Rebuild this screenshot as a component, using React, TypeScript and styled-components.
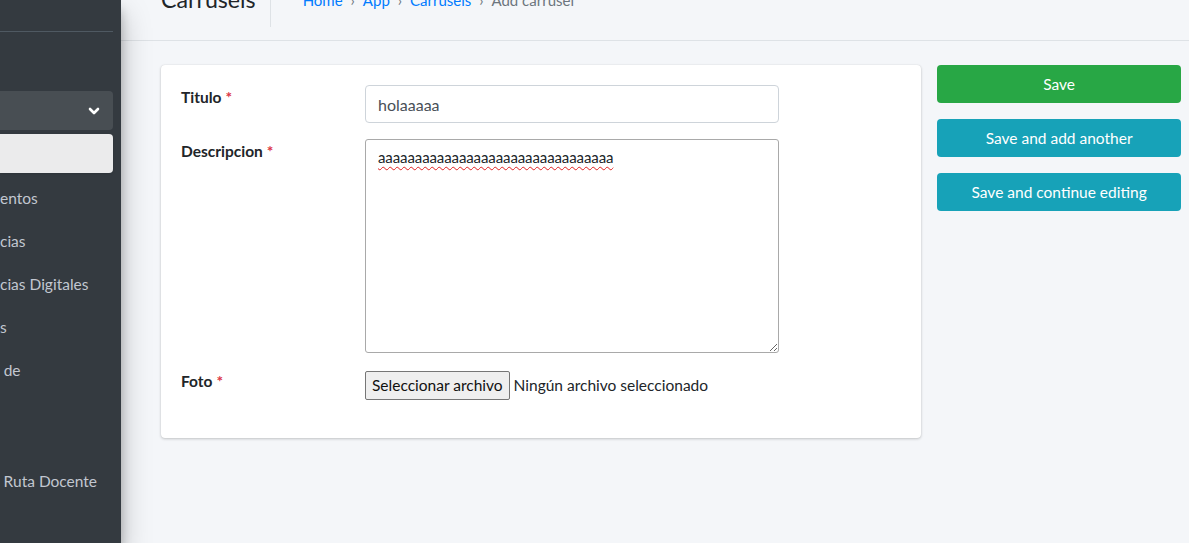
import React from "react";
import styled, { createGlobalStyle } from "styled-components";

const GlobalStyle = createGlobalStyle`
  html, body { margin: 0; padding: 0; }
  body {
    font-family: Lato, "Liberation Sans", sans-serif;
    font-size: 16px;
    color: #212529;
    background: #f4f6f9;
    overflow: hidden;
  }
  * { box-sizing: border-box; }
`;

const Shell = styled.div`
  display: flex;
  width: 1189px;
  height: 543px;
  overflow: hidden;
`;

const Sidebar = styled.aside`
  width: 121px;
  flex: none;
  background: #343a40;
  box-shadow: 0 14px 28px rgba(0, 0, 0, 0.25), 0 10px 10px rgba(0, 0, 0, 0.22);
  overflow: hidden;
  position: relative;
  z-index: 2;
`;

const Brand = styled.div`
  height: 32px;
  margin-right: 8px;
  border-bottom: 1px solid #4f5962;
`;

const Nav = styled.nav`
  display: flex;
  flex-direction: column;
  gap: 4px;
  padding-top: 59px;
  margin-right: 8px;
`;

const OpenItem = styled.div`
  height: 39px;
  background: rgba(255, 255, 255, 0.1);
  border-radius: 0 4px 4px 0;
  display: flex;
  align-items: center;
  justify-content: flex-end;
  padding-right: 13px;
  color: #fff;
`;

const ActiveItem = styled.div`
  height: 39px;
  background: rgba(255, 255, 255, 0.9);
  border-radius: 0 4px 4px 0;
  box-shadow: 0 1px 3px rgba(0, 0, 0, 0.12);
`;

const SubList = styled.div`
  display: flex;
  flex-direction: column;
`;

const NavLink = styled.div<{ $indent?: number; $height?: number }>`
  height: ${(p) => p.$height ?? 43}px;
  padding-top: 9px;
  color: #c2c7d0;
  font-size: 15.5px;
  line-height: 24px;
  white-space: nowrap;
  text-indent: ${(p) => p.$indent ?? 0}px;
`;

const Main = styled.main`
  flex: 1;
  display: flex;
  flex-direction: column;
  min-width: 0;
`;

const Header = styled.header`
  height: 41px;
  border-bottom: 1px solid #dee2e6;
  display: flex;
  align-items: flex-end;
  padding: 0 0 27px 40px;
  overflow: hidden;
`;

const Title = styled.h1`
  margin: 0 32px -14px 0;
  font-size: 23.2px;
  font-weight: 400;
  line-height: 30px;
  color: #212529;
  padding: 0 14px 13px 0;
  border-right: 1px solid #dee2e6;
  height: 40px;
  display: flex;
  align-items: flex-end;
`;

const Crumbs = styled.ol`
  list-style: none;
  margin: 0 0 -7px 0;
  padding: 0;
  display: flex;
  align-items: center;
  font-size: 15px;
  line-height: 24px;
  transform: translateY(-8px);
`;

const Crumb = styled.li<{ $active?: boolean }>`
  color: ${(p) => (p.$active ? "#6c757d" : "#007bff")};
  display: flex;
  align-items: center;
`;

const Sep = styled.span`
  color: #6c757d;
  padding: 0 8px;
`;

const Content = styled.div`
  display: flex;
  gap: 16px;
  padding: 24px 8px 0 40px;
  align-items: flex-start;
`;

const Card = styled.section`
  width: 761px;
  background: #fff;
  border-radius: 4px;
  box-shadow: 0 0 1px rgba(0, 0, 0, 0.125), 0 1px 3px rgba(0, 0, 0, 0.2);
  padding: 20px 20px 22px 20px;
`;

const Row = styled.div`
  display: flex;
  margin-bottom: 16px;
`;

const Label = styled.label`
  width: 184px;
  flex: none;
  font-weight: 700;
  font-size: 15.5px;
  line-height: 24px;
  color: #212529;
`;

const Req = styled.span`
  color: #dc3545;
  margin-left: 4px;
`;

const TextInput = styled.input`
  width: 414px;
  height: 38px;
  border: 1px solid #ced4da;
  border-radius: 4px;
  padding: 6px 12px;
  font-family: inherit;
  font-size: 16px;
  color: #495057;
  background: #fff;
  outline: none;
`;

const TextArea = styled.textarea`
  width: 414px;
  height: 214px;
  border: 1px solid #a9a9a9;
  border-radius: 3px;
  padding: 8px 12px;
  font-family: inherit;
  font-size: 15px;
  line-height: 19px;
  letter-spacing: -0.1px;
  color: #212529;
  background: #fff;
  outline: none;
  text-decoration: underline wavy #e02020;
  text-decoration-thickness: 1px;
  text-underline-offset: 3px;
`;

const FileRow = styled.div`
  display: flex;
  align-items: center;
  gap: 4px;
  height: 30px;
  margin-top: 1px;
`;

const FileButton = styled.button`
  height: 29px;
  padding: 0 6px;
  font-family: inherit;
  font-size: 15.5px;
  color: #111;
  background: #efefef;
  border: 1px solid #767676;
  border-radius: 2px;
`;

const FileText = styled.span`
  font-size: 15.5px;
  color: #212529;
`;

const Actions = styled.div`
  width: 244px;
  display: flex;
  flex-direction: column;
  gap: 16px;
`;

const ActionButton = styled.button<{ $variant: "success" | "info" }>`
  height: 38px;
  border: none;
  border-radius: 4px;
  font-family: inherit;
  font-size: 15.5px;
  color: #fff;
  background: ${(p) => (p.$variant === "success" ? "#28a745" : "#17a2b8")};
`;

export default function App() {
  return (
    <>
      <GlobalStyle />
      <Shell>
        <Sidebar>
          <Brand />
          <Nav>
            <OpenItem>
              <svg width="12" height="12" viewBox="0 0 12 12" fill="none">
                <path d="M2 4l4 4 4-4" stroke="#fff" strokeWidth="2.6" strokeLinecap="round" strokeLinejoin="round" />
              </svg>
            </OpenItem>
            <ActiveItem />
            <SubList>
              <NavLink>entos</NavLink>
              <NavLink>cias</NavLink>
              <NavLink>cias Digitales</NavLink>
              <NavLink>s</NavLink>
              <NavLink $height={111} $indent={-8}>a de</NavLink>
              <NavLink $indent={-9}>n Ruta Docente</NavLink>
            </SubList>
          </Nav>
        </Sidebar>
        <Main>
          <Header>
            <Title>Carrusels</Title>
            <Crumbs>
              <Crumb>Home</Crumb>
              <Sep>›</Sep>
              <Crumb>App</Crumb>
              <Sep>›</Sep>
              <Crumb>Carrusels</Crumb>
              <Sep>›</Sep>
              <Crumb $active>Add carrusel</Crumb>
            </Crumbs>
          </Header>
          <Content>
            <Card>
              <Row>
                <Label>
                  Titulo<Req>*</Req>
                </Label>
                <TextInput defaultValue="holaaaaa" />
              </Row>
              <Row>
                <Label>
                  Descripcion<Req>*</Req>
                </Label>
                <TextArea spellCheck={false} defaultValue="aaaaaaaaaaaaaaaaaaaaaaaaaaaaaaaa" />
              </Row>
              <Row>
                <Label>
                  Foto<Req>*</Req>
                </Label>
                <FileRow>
                  <FileButton type="button">Seleccionar archivo</FileButton>
                  <FileText>Ningún archivo seleccionado</FileText>
                </FileRow>
              </Row>
            </Card>
            <Actions>
              <ActionButton $variant="success">Save</ActionButton>
              <ActionButton $variant="info">Save and add another</ActionButton>
              <ActionButton $variant="info">Save and continue editing</ActionButton>
            </Actions>
          </Content>
        </Main>
      </Shell>
    </>
  );
}
